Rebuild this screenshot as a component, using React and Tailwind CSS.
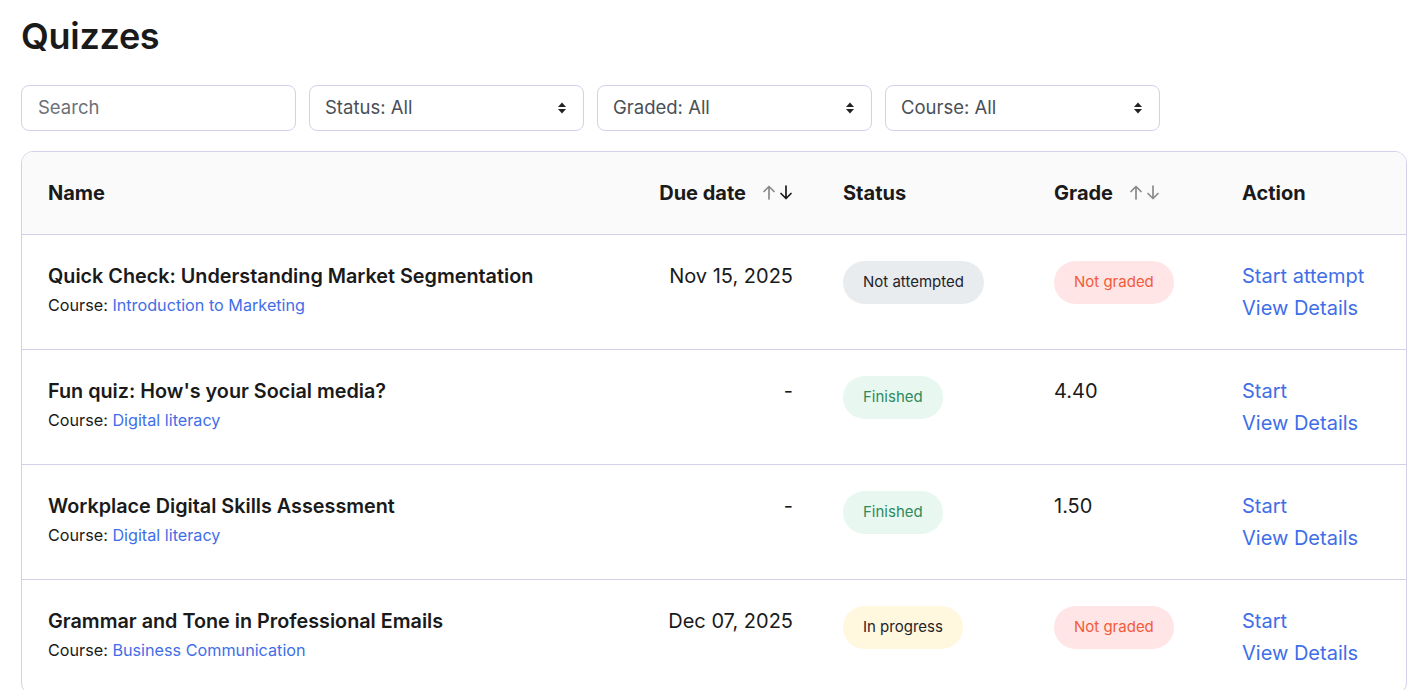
import React from 'react';

const QUIZZES = [
  { name: 'Quick Check: Understanding Market Segmentation', course: 'Introduction to Marketing', due: 'Nov 15, 2025', status: 'Not attempted', grade: null, action: 'Start attempt' },
  { name: "Fun quiz: How's your Social media?", course: 'Digital literacy', due: '-', status: 'Finished', grade: '4.40', action: 'Start' },
  { name: 'Workplace Digital Skills Assessment', course: 'Digital literacy', due: '-', status: 'Finished', grade: '1.50', action: 'Start' },
  { name: 'Grammar and Tone in Professional Emails', course: 'Business Communication', due: 'Dec 07, 2025', status: 'In progress', grade: null, action: 'Start' },
];

const STATUS_STYLES = {
  'Not attempted': 'bg-[#e9ecef] text-[#1f2328]',
  Finished: 'bg-[#e8f8f0] text-[#2e8a5c]',
  'In progress': 'bg-[#fff7de] text-[#1f2328]',
};

const Chevrons = () => (
  <svg width="10" height="14" viewBox="0 0 10 14" className="text-[#222]">
    <path d="M5 1.5 L9 6 H1 Z" fill="currentColor" />
    <path d="M5 12.5 L9 8 H1 Z" fill="currentColor" />
  </svg>
);

const SortArrows = ({ active }) => (
  <span className="ml-[16px] inline-flex items-center gap-[3px]">
    <svg width="14" height="17" viewBox="0 0 14 17" fill="none" stroke="#8a8a8a" strokeWidth="1.7" strokeLinecap="round" strokeLinejoin="round">
      <path d="M7 15V2.5M2 7.5l5-5 5 5" />
    </svg>
    <svg width="14" height="17" viewBox="0 0 14 17" fill="none" stroke={active ? '#1a1a1a' : '#8a8a8a'} strokeWidth="1.7" strokeLinecap="round" strokeLinejoin="round">
      <path d="M7 2v12.5M2 9.5l5 5 5-5" />
    </svg>
  </span>
);

const FilterSelect = ({ label }) => (
  <div className="flex h-[46px] w-[275px] items-center justify-between rounded-lg border border-[#d3d1ea] bg-white pl-[15px] pr-[16px] text-[18.5px] text-[#4a4f57]">
    <span>{label}</span>
    <Chevrons />
  </div>
);

export default function App() {
  return (
    <div className="min-h-screen bg-white px-[21px] pt-[14px] text-[#1a1a1a]" style={{ fontFamily: 'Inter, "Noto Sans", sans-serif' }}>
      <h1 className="text-[36px] font-semibold leading-[44px] tracking-[-0.3px]">Quizzes</h1>

      <div className="mt-[27px] flex gap-[13px]">
        <div className="flex h-[46px] w-[275px] items-center rounded-lg border border-[#d3d1ea] bg-white px-[16px] text-[18.5px] text-[#6b7078]">
          Search
        </div>
        <FilterSelect label="Status: All" />
        <FilterSelect label="Graded: All" />
        <FilterSelect label="Course: All" />
      </div>

      <div className="mt-[20px] w-[1386px] overflow-hidden rounded-[12px] border border-[#d3d1ea]">
        <table className="w-full table-fixed border-collapse">
          <colgroup>
            <col className="w-[612px]" />
            <col className="w-[184px]" />
            <col className="w-[210px]" />
            <col className="w-[188px]" />
            <col />
          </colgroup>
          <thead className="bg-[#fafafa]">
            <tr className="h-[82px] text-[20px] font-bold">
              <th className="pl-[26px] text-left">Name</th>
              <th className="pr-[25px] text-right">
                <span className="inline-flex items-center">Due date<SortArrows active /></span>
              </th>
              <th className="pl-[25px] text-left">Status</th>
              <th className="pl-[26px] text-left">
                <span className="inline-flex items-center">Grade<SortArrows /></span>
              </th>
              <th className="pl-[26px] text-left">Action</th>
            </tr>
          </thead>
          <tbody>
            {QUIZZES.map((q) => (
              <tr key={q.name} className="h-[115px] border-t border-[#d3d1ea] align-top">
                <td className="pl-[26px] pt-[27px]">
                  <div className="text-[19.8px] font-semibold leading-[28px]">{q.name}</div>
                  <div className="mt-[3px] text-[16.2px] leading-[24px]">
                    Course: <span className="text-[#3f6ee8]">{q.course}</span>
                  </div>
                </td>
                <td className="pr-[25px] pt-[27px] text-right text-[20px] leading-[28px]">{q.due}</td>
                <td className="pl-[25px] pt-[26px]">
                  <span className={`inline-flex h-[43px] items-center rounded-full px-[20px] text-[15px] ${STATUS_STYLES[q.status]}`}>
                    {q.status}
                  </span>
                </td>
                <td className="pl-[26px] pt-[26px]">
                  {q.grade ? (
                    <div className="pt-[1px] text-[20px] leading-[28px]">{q.grade}</div>
                  ) : (
                    <span className="inline-flex h-[43px] items-center rounded-full bg-[#ffe5e5] px-[20px] text-[15px] text-[#f25b3a]">
                      Not graded
                    </span>
                  )}
                </td>
                <td className="pl-[26px] pt-[25px] text-[20px] leading-[32px] text-[#3f6ee8]">
                  <div>{q.action}</div>
                  <div>View Details</div>
                </td>
              </tr>
            ))}
          </tbody>
        </table>
      </div>
    </div>
  );
}
